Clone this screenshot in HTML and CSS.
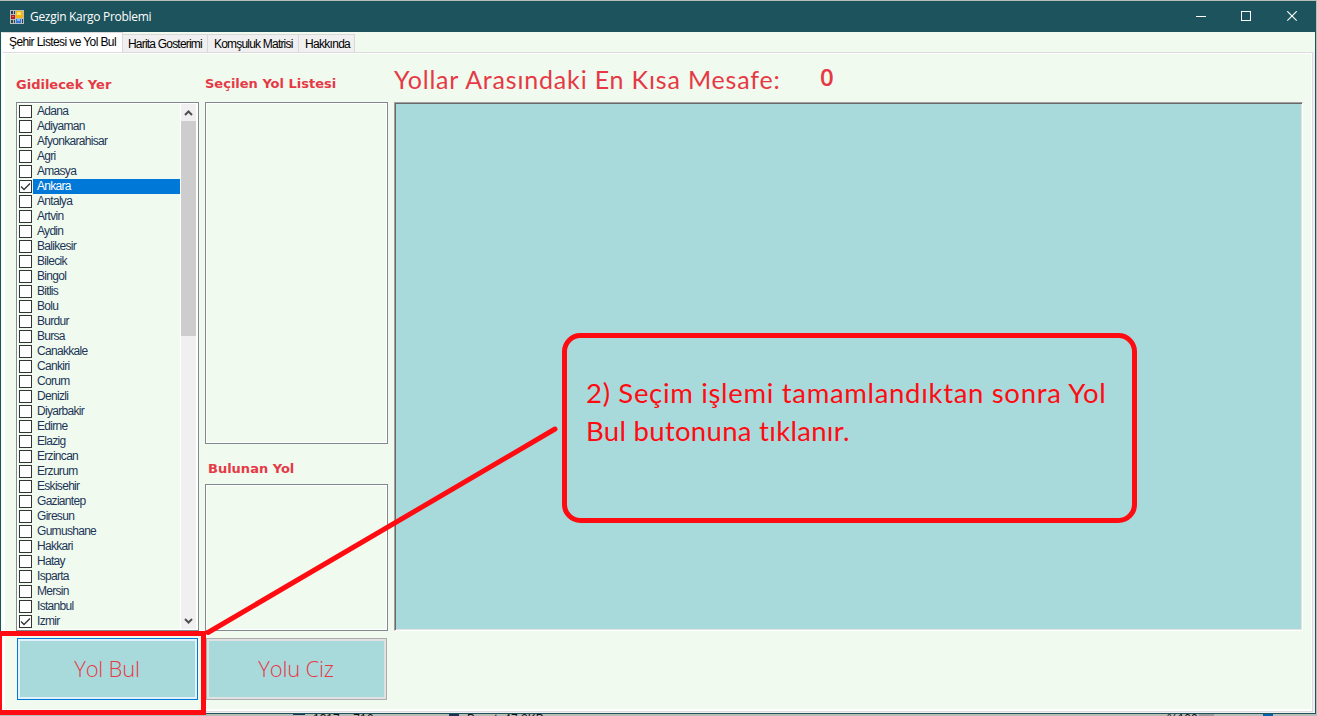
FILE: index.html
```html
<!DOCTYPE html>
<html lang="tr">
<head>
<meta charset="utf-8">
<title>Gezgin Kargo Problemi</title>
<link rel="stylesheet" href="styles.css">
</head>
<body>
<div class="window">
  <header class="titlebar">
    <svg class="app-icon" width="14" height="14" viewBox="0 0 14 14" shape-rendering="crispEdges">
      <path fill="#b9bdc0" d="M0 0h14v14H0z"/>
      <path fill="#26434e" d="M1 1h2v3H1zM4 1h1v3H4zM1 10h2v3H1zM4 10h1v3H4z"/>
      <path fill="#b81c14" d="M1 5h4v4H1z"/><path fill="#ef6a50" d="M2 6h2v1H2z"/>
      <path fill="#f2b90d" d="M6 1h7v7H6z"/><path fill="#ffe27a" d="M7 2h4v3H7z"/>
      <path fill="#3476d6" d="M6 9h5v4H6z"/><path fill="#80b4ff" d="M7 9h3v2H7z"/><path fill="#26434e" d="M12 9h1v4h-1z"/>
    </svg>
    <span class="title">Gezgin Kargo Problemi</span>
    <svg class="controls" width="104" height="12" viewBox="0 0 104 12" fill="none" stroke="#fff">
      <path d="M0 5.500h10M45.500 .5h9v9h-9z" shape-rendering="crispEdges"/>
      <path d="M91.300 .300l9.400 9.400M100.700 .300l-9.400 9.400" stroke-width="1.100"/>
    </svg>
  </header>
  <nav class="tabs">
    <span class="tab active">Şehir Listesi ve Yol Bul</span>
    <span class="tab t2">Harita Gosterimi</span>
    <span class="tab t3">Komşuluk Matrisi</span>
    <span class="tab t4">Hakkında</span>
  </nav>
  <main class="page">
    <section class="col cities">
      <h2 class="label first">Gidilecek Yer</h2>
      <div class="listbox city-list">
        <ul class="items" id="items"></ul>
        <div class="scrollbar">
          <svg width="15" height="16" viewBox="0 0 15 16"><path d="M4 11l3.500-3.500L11 11" fill="none" stroke="#505050" stroke-width="2"/></svg>
          <div class="thumb"></div>
          <svg class="down" width="15" height="16" viewBox="0 0 15 16"><path d="M4 6l3.500 3.500L11 6" fill="none" stroke="#505050" stroke-width="2"/></svg>
        </div>
      </div>
      <button class="btn focused">Yol Bul</button>
    </section>
    <section class="col routes">
      <h2 class="label">Seçilen Yol Listesi</h2>
      <div class="listbox selected"></div>
      <h2 class="label found">Bulunan Yol</h2>
      <div class="listbox result"></div>
      <button class="btn">Yolu Ciz</button>
    </section>
    <section class="col map">
      <div class="distance"><span class="dist-label">Yollar Arasındaki En Kısa Mesafe:</span><span class="dist-value">0</span></div>
      <div class="canvas"></div>
    </section>
  </main>
</div>
<footer class="behind">
  <i class="size-icon"></i><span class="dims">1317 × 716px</span>
  <i class="disk-icon"></i><span class="filesize">Boyut: 47,2KB</span>
  <span class="zoom">%100</span><i class="slider-end"></i><i class="slider"></i>
</footer>
<svg class="annotation" width="1317" height="716" viewBox="0 0 1317 716" fill="none" stroke="#ff0c12" stroke-width="5">
  <rect x="-.5" y="633.500" width="204" height="79"/>
  <path d="M208 632.500L555 429" stroke-linecap="round"/>
  <rect x="564.500" y="335.500" width="570" height="185" rx="16"/>
</svg>
<p class="note">2) Seçim işlemi tamamlandıktan sonra Yol<br><span class="line2">Bul butonuna tıklanır.</span></p>
<script src="app.js"></script>
</body>
</html>
```
FILE: styles.css
```css
* { box-sizing: border-box; }
body { margin: 0; width: 1317px; height: 716px; overflow: hidden; background: #b9bdb8; font-family: "Liberation Sans", sans-serif; display: flex; flex-direction: column; }
.window { width: 1316px; height: 713px; flex: none; margin-top: 1px; border: 1px solid #1c535c; border-top: 0; background: #f0faee; }
.titlebar { height: 31px; background: #1c535c; margin: 0 -1px; display: flex; align-items: center; padding: 0 16px 0 10px; color: #fff; }
.title { font: 12px "Open Sans", sans-serif; margin-left: 6px; letter-spacing: -.3px; }
.controls { margin-left: auto; }
.tabs { height: 20px; display: flex; align-items: flex-end; font-size: 12px; letter-spacing: -.7px; padding-left: 1px; color: #000; }
.tab { height: 18px; line-height: 19px; border: 1px solid #d9d9d9; border-left: 0; border-bottom: 0; background: #f0f0f0; padding-left: 5px; white-space: nowrap; }
.active { background: #fff; width: 121px; height: 20px; line-height: 19px; padding-left: 7px; letter-spacing: -.6px; }
.t2 { width: 85px; letter-spacing: -.8px; }
.t3 { width: 91px; padding-left: 6px; letter-spacing: -.8px; }
.t4 { width: 56px; padding-left: 6px; }
.page { height: 660px; margin: 0 2px 0 1px; border: 1px solid #dcdcdc; border-left-color: #fff; display: flex; padding-left: 13px; box-shadow: 2px 0 #f0f0f0, 0 1px #f0f0f0, inset 2px 1px #fff, inset -1px -2px #fff; }
.col { display: flex; flex-direction: column; }
.cities { width: 189px; }
.routes { width: 189px; }
.label { margin: 0; height: 49px; padding-top: 23px; font: bold 13px/16px "DejaVu Sans", sans-serif; color: #e63946; white-space: nowrap; }
.label.first { padding-top: 24px; }
.listbox { border: 1px solid #828790; box-shadow: inset 0 0 0 1px #fff; width: 183px; flex: none; }
.city-list { height: 529px; display: flex; padding: 1px; }
.items { margin: 0; padding: 0 0 0 1px; list-style: none; width: 163px; height: 525px; font-size: 12px; letter-spacing: -.7px; color: #1d3557; }
.item { height: 15px; display: flex; align-items: center; }
.box { width: 13px; height: 13px; border: 1px solid #333; background: #fff; margin-right: 1px; flex: none; display: block; }
.box svg { display: block; }
.name { flex: 1; line-height: 15px; padding-left: 4px; }
.item.current .name { background: #0078d7; color: #fff; }
.scrollbar { width: 17px; background: #f0f0f0; display: flex; flex-direction: column; border: solid #fff; border-width: 0 1px; }
.scrollbar svg { display: block; }
.thumb { height: 215px; background: #cdcdcd; margin-top: 1px; }
.down { margin-top: auto; }
.btn { width: 181px; height: 62px; margin: 7px 0 0 1px; border: 1px solid #adadad; box-shadow: inset 0 0 0 2px #e1e1e1; background: #a8dadc; color: #e63946; font: 300 22px "Open Sans", sans-serif; letter-spacing: -.2px; padding: 0 1px 2px 0; }
.focused { border-color: #0078d7; box-shadow: inset 0 0 0 2px #e5f1fb; }
.selected { height: 342px; }
.found { height: 41px; margin-bottom: -1px; padding: 17px 0 0 3px; }
.result { height: 147px; }
.distance { height: 49px; display: flex; color: #e63946; white-space: nowrap; }
.dist-label { font: 25px/34px Lato, sans-serif; letter-spacing: .82px; padding-top: 9px; width: 426px; }
.dist-value { font: 600 24px/30px "Open Sans", sans-serif; padding-top: 9px; }
.canvas { width: 909px; height: 529px; background: #a8dadc; border: 1px solid; border-color: #a0a0a0 #fff #fff #a0a0a0; box-shadow: inset 1px 1px #696969, inset -1px -1px #e3e3e3; }
.behind { height: 2px; flex: none; overflow: hidden; display: flex; align-items: flex-start; padding-left: 293px; font-size: 12px; line-height: 12px; color: #111; white-space: nowrap; }
.size-icon { width: 12px; height: 1px; background: #1c3550; }
.dims { margin: -1px 0 0 8px; width: 136px; }
.disk-icon { width: 10px; height: 2px; border: 1px solid #1c3550; }
.filesize { margin: -1px 0 0 8px; width: 700px; }
.zoom { margin-top: -1px; width: 32px; }
.slider-end { width: 15px; height: 2px; background: #999; }
.slider { margin-left: 49px; width: 10px; height: 2px; background: #0063b1; }
.annotation { position: absolute; left: 0; top: 0; }
.note { position: absolute; left: 586px; top: 374px; margin: 0; font: 27.5px/38px Lato, sans-serif; letter-spacing: .68px; font-variant-ligatures: none; color: #ff0c12; white-space: nowrap; }
.line2 { letter-spacing: .3px; }
```
FILE: app.js
```js
const cities = "Adana,Adiyaman,Afyonkarahisar,Agri,Amasya,Ankara,Antalya,Artvin,Aydin,Balikesir,Bilecik,Bingol,Bitlis,Bolu,Burdur,Bursa,Canakkale,Cankiri,Corum,Denizli,Diyarbakir,Edirne,Elazig,Erzincan,Erzurum,Eskisehir,Gaziantep,Giresun,Gumushane,Hakkari,Hatay,Isparta,Mersin,Istanbul,Izmir".split(",");
const tick = '<svg width="11" height="11" viewBox="0 0 11 11"><path d="M1 5.500L4 8.500L10 2.500" fill="none" stroke="#333" stroke-width="1.300"/></svg>';
document.getElementById("items").innerHTML = cities.map(c =>
  `<li class="item${c === "Ankara" ? " current" : ""}"><span class="box">${c === "Ankara" || c === "Izmir" ? tick : ""}</span><span class="name">${c}</span></li>`).join("");
```
